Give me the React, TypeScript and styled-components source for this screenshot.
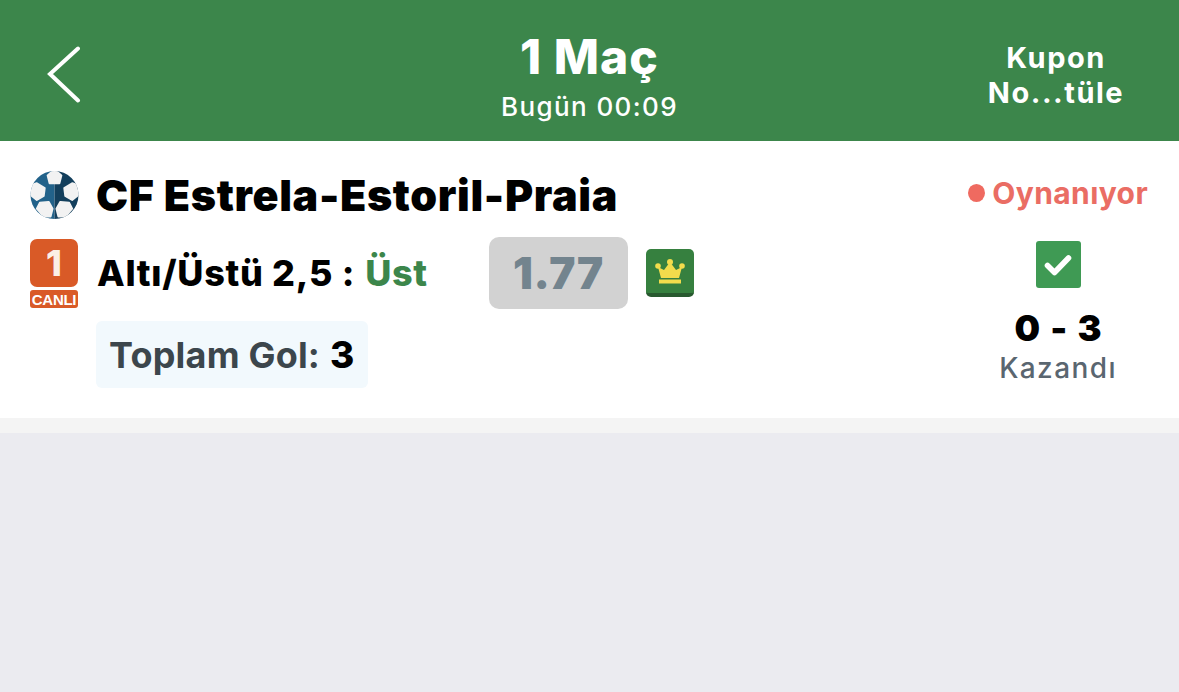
import styled, { createGlobalStyle } from "styled-components";

const GlobalStyle = createGlobalStyle`
  html, body {
    margin: 0;
    padding: 0;
    background: #ebebf0;
    font-family: Inter, "Liberation Sans", sans-serif;
    font-feature-settings: "calt" 0;
  }
  * { box-sizing: border-box; }
`;

const Page = styled.div`
  width: 1179px;
  height: 692px;
  display: flex;
  flex-direction: column;
  background: #ebebf0;
  overflow: hidden;
`;

const Header = styled.header`
  height: 141px;
  flex: none;
  background: #3c864b;
  color: #fff;
  display: grid;
  grid-template-columns: 200px 1fr 200px;
  align-items: center;
`;

const BackButton = styled.div`
  padding: 6px 0 0 46px;
  display: flex;
  align-items: center;
  height: 100%;
  svg { display: block; }
`;

const HeaderCenter = styled.div`
  display: flex;
  flex-direction: column;
  align-items: center;
  padding-top: 9px;
`;

const HeaderTitle = styled.div`
  font-size: 48px;
  font-weight: 800;
  line-height: 56px;
  letter-spacing: 1px;
`;

const HeaderSub = styled.div`
  margin-top: 7px;
  font-size: 26px;
  font-weight: 500;
  line-height: 30px;
  letter-spacing: 1.4px;
`;

const HeaderAction = styled.div`
  font-size: 29px;
  font-weight: 700;
  line-height: 35px;
  text-align: center;
  letter-spacing: 1.5px;
  padding: 8px 46px 0 0;
  width: 200px;
`;

const Card = styled.section`
  flex: none;
  height: 277px;
  background: #fff;
  display: flex;
  justify-content: space-between;
  padding: 29px 31px 0 30px;
`;

const Main = styled.div`
  display: flex;
  flex-direction: column;
`;

const TeamRow = styled.div`
  display: flex;
  align-items: center;
  gap: 17px;
  height: 50px;
`;

const TeamName = styled.div`
  font-size: 43px;
  font-weight: 900;
  letter-spacing: 0.65px;
  color: #000;
  white-space: nowrap;
`;

const BetRow = styled.div`
  display: flex;
  align-items: flex-start;
  margin-top: 17px;
`;

const LiveBadge = styled.div`
  width: 48px;
  display: flex;
  flex-direction: column;
  gap: 3px;
  margin-top: 2px;
`;

const LiveNumber = styled.div`
  height: 48px;
  background: #d95a27;
  border-radius: 7px;
  color: #fbefe6;
  font-size: 36px;
  font-weight: 800;
  display: flex;
  align-items: center;
  justify-content: center;
`;

const LiveLabel = styled.div`
  height: 18px;
  background: #d95a27;
  border-radius: 3px;
  color: #fff;
  font-family: "Liberation Sans", sans-serif;
  font-size: 15px;
  font-weight: 700;
  display: flex;
  align-items: center;
  justify-content: center;
  letter-spacing: -0.3px;
`;

const Market = styled.div`
  margin-left: 19px;
  width: 392px;
  height: 72px;
  display: flex;
  align-items: center;
  font-size: 36px;
  font-weight: 800;
  letter-spacing: 0.7px;
  color: #000;
  white-space: nowrap;
`;

const Pick = styled.span`
  color: #3c864b;
  margin-left: 10px;
`;

const Odds = styled.div`
  width: 139px;
  height: 72px;
  background: #d2d2d2;
  border-radius: 10px;
  color: #73848e;
  font-size: 44px;
  font-weight: 900;
  letter-spacing: 0.8px;
  display: flex;
  align-items: center;
  justify-content: center;
`;

const CrownBox = styled.div`
  width: 48px;
  height: 48px;
  margin: 12px 0 0 18px;
  background: #36803f;
  border-bottom: 4px solid #28592f;
  border-radius: 5px;
  display: flex;
  align-items: center;
  justify-content: center;
`;

const GoalBox = styled.div`
  align-self: flex-start;
  margin: 12px 0 0 66px;
  padding-left: 13px;
  width: 272px;
  height: 67px;
  background: #f2f9fd;
  border-radius: 6px;
  display: flex;
  align-items: center;
  gap: 10px;
  font-size: 36px;
  font-weight: 700;
  letter-spacing: 0.2px;
  color: #3c464c;
  white-space: nowrap;
`;

const GoalValue = styled.span`
  color: #000;
  font-size: 37px;
  font-weight: 800;
`;

const Side = styled.div`
  width: 180px;
  display: flex;
  flex-direction: column;
  align-items: center;
`;

const Status = styled.div`
  width: 100%;
  height: 50px;
  padding-bottom: 4px;
  display: flex;
  align-items: center;
  justify-content: flex-end;
  gap: 7px;
  font-size: 30px;
  font-weight: 700;
  letter-spacing: 0.4px;
  color: #ea6d64;
  white-space: nowrap;
`;

const StatusDot = styled.span`
  width: 18px;
  height: 18px;
  border-radius: 50%;
  background: #ef6a60;
`;

const CheckBox = styled.div`
  width: 45px;
  height: 47px;
  margin-top: 21px;
  background: #3f9a54;
  border-radius: 3px;
  display: flex;
  align-items: center;
  justify-content: center;
`;

const Score = styled.div`
  margin-top: 17px;
  font-size: 36px;
  line-height: 46px;
  font-weight: 900;
  color: #000;
  word-spacing: 3px;
`;

const Result = styled.div`
  font-size: 28px;
  line-height: 34px;
  font-weight: 500;
  color: #5a6670;
  letter-spacing: 1.4px;
`;

const Strip = styled.div`
  height: 15px;
  flex: none;
  background: #f4f4f4;
`;

const Ball = () => (
  <svg width="49" height="50" viewBox="0 0 50 50">
    <clipPath id="ball-clip">
      <circle cx="25" cy="25" r="24.5" />
    </clipPath>
    <g clipPath="url(#ball-clip)">
      <rect width="25" height="50" fill="#22628a" />
      <rect x="25" width="25" height="50" fill="#133f5c" />
      <g fill="#f2f2f2" stroke="#f2f2f2" strokeWidth="2" strokeLinejoin="round">
        <path d="M18 5l7-6 7 6-2 8H20z" />
        <path d="M7 13l8 5-1 8-7 4-9-7 2-8z" />
        <path d="M43 13l-8 5 1 8 7 4 9-7-2-8z" />
        <path d="M10 33l9-1 4 7-2 8-7 0-7-8z" />
        <path d="M40 33l-9-1-4 7 2 8 7 0 7-8z" />
      </g>
    </g>
  </svg>
);

const Crown = () => (
  <svg width="30" height="25" viewBox="0 0 30 25">
    <circle cx="3" cy="7" r="2.8" fill="#f2dc4c" />
    <circle cx="15" cy="3" r="3" fill="#f2dc4c" />
    <circle cx="27" cy="7" r="2.8" fill="#f2dc4c" />
    <path d="M3 8l6 3 6-8 6 8 6-3-3 11H6z" fill="#f2dc4c" />
    <rect x="4" y="20.5" width="22" height="4" fill="#f2dc4c" />
  </svg>
);

const Check = () => (
  <svg width="28" height="24" viewBox="0 0 28 24">
    <path d="M3.5 12.5l7 7L24.5 5" fill="none" stroke="#fff" strokeWidth="5.6" strokeLinecap="round" strokeLinejoin="round" />
  </svg>
);

const App = () => (
  <Page>
    <GlobalStyle />
    <Header>
      <BackButton>
        <svg width="36" height="58" viewBox="0 0 36 58">
          <path d="M32 3.5L4 29l28 26.5" fill="none" stroke="#fff" strokeWidth="4" strokeLinecap="round" strokeLinejoin="miter" />
        </svg>
      </BackButton>
      <HeaderCenter>
        <HeaderTitle>1 Maç</HeaderTitle>
        <HeaderSub>Bugün 00:09</HeaderSub>
      </HeaderCenter>
      <HeaderAction>
        Kupon
        <br />
        No...tüle
      </HeaderAction>
    </Header>
    <Card>
      <Main>
        <TeamRow>
          <Ball />
          <TeamName>CF Estrela-Estoril-Praia</TeamName>
        </TeamRow>
        <BetRow>
          <LiveBadge>
            <LiveNumber>1</LiveNumber>
            <LiveLabel>CANLI</LiveLabel>
          </LiveBadge>
          <Market>
            Altı/Üstü 2,5 :<Pick>Üst</Pick>
          </Market>
          <Odds>1.77</Odds>
          <CrownBox>
            <Crown />
          </CrownBox>
        </BetRow>
        <GoalBox>
          Toplam Gol: <GoalValue>3</GoalValue>
        </GoalBox>
      </Main>
      <Side>
        <Status>
          <StatusDot />
          Oynanıyor
        </Status>
        <CheckBox>
          <Check />
        </CheckBox>
        <Score>0 - 3</Score>
        <Result>Kazandı</Result>
      </Side>
    </Card>
    <Strip />
  </Page>
);

export default App;
